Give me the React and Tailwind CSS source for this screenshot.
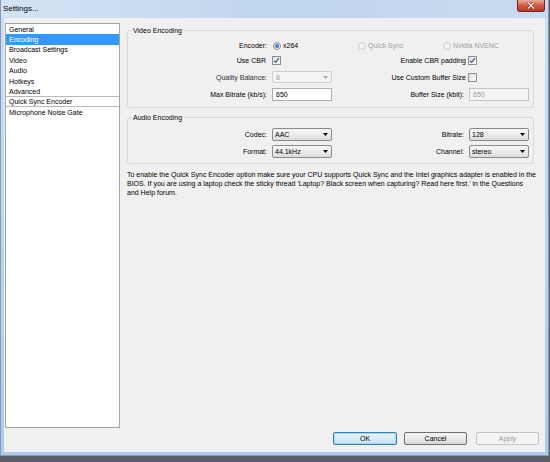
import React from "react";

const Check = ({ checked }) => (
  <span className="w-[9px] h-[9px] shrink-0 border border-[#8e8f8f] bg-gradient-to-br from-[#dcdcdc] to-white flex items-center justify-center">
    {checked && (
      <svg width="7" height="7" viewBox="0 0 7 7">
        <path d="M1 3.6 L2.7 5.4 L6 1.2" stroke="#3a5596" strokeWidth="1.2" fill="none" />
      </svg>
    )}
  </span>
);

const Radio = ({ checked, disabled }) => (
  <span
    className={
      disabled
        ? "w-[8px] h-[8px] shrink-0 rounded-full border border-[#c9c9c9] bg-[#f3f3f3]"
        : "w-[8px] h-[8px] shrink-0 rounded-full border border-[#8e8f8f] bg-gradient-to-br from-[#d8d8d8] to-white flex items-center justify-center"
    }
  >
    {checked && <span className="w-[4px] h-[4px] rounded-full bg-gradient-to-br from-[#5aa0e0] to-[#1d5fae]" />}
  </span>
);

const Arrow = ({ color }) => (
  <svg width="5" height="3" viewBox="0 0 5 3" className="shrink-0">
    <path d="M0 0 L5 0 L2.5 3 Z" fill={color} />
  </svg>
);

const Combo = ({ value, disabled, h }) => (
  <div
    className={
      disabled
        ? "w-[60px] h-[12px] flex items-center justify-between pl-[3px] pr-[3px] border border-[#cfcfcf] rounded-[2px] bg-[#f4f4f4] text-[#9a9a9a]"
        : "w-[60px] h-[13px] flex items-center justify-between pl-[2px] pr-[3px] border border-[#8a8a8a] rounded-[2px] bg-gradient-to-b from-[#f6f6f6] via-[#ececec] to-[#dcdcdc] text-black"
    }
  >
    <span>{value}</span>
    <Arrow color={disabled ? "#a8a8a8" : "#000"} />
  </div>
);

const Field = ({ value, disabled }) => (
  <div
    className={
      disabled
        ? "w-[60px] h-[13px] flex items-center pl-[3px] border border-[#c3c6c9] bg-[#f4f4f4] text-[#9a9a9a]"
        : "w-[60px] h-[13px] flex items-center pl-[3px] border border-[#abadb3] bg-white text-black"
    }
  >
    {value}
  </div>
);

const items = [
  "General",
  "Encoding",
  "Broadcast Settings",
  "Video",
  "Audio",
  "Hotkeys",
  "Advanced",
  "Quick Sync Encoder",
  "Microphone Noise Gate",
];

export default function App() {
  return (
    <div className="w-[550px] h-[462px] bg-[#5b5e64] overflow-hidden font-['Liberation_Sans',Arial,sans-serif] text-[7px] leading-[9px] text-black">
      <div className="w-[549px] h-[456px] flex flex-col bg-gradient-to-b from-[#cddff2] via-[#bfd5ee] to-[#aecbeb] border-l border-r border-b border-[#7f9cbf]">
        {/* Title bar */}
        <div className="h-[18px] flex justify-between bg-gradient-to-r from-[#d3e3f4] via-[#c0d6ee] to-[#c8dbf0]">
          <div className="pl-[2px] pt-[4px] text-[8px] leading-[10px] text-black">Settings...</div>
          <div className="w-[28px] h-[12px] mr-[3px] rounded-b-[3px] border border-t-0 border-[#6e2a20] bg-gradient-to-b from-[#e9a99a] via-[#d25a43] to-[#c1361f] flex items-center justify-center">
            <svg width="8" height="7" viewBox="0 0 8 7">
              <path d="M1 0.5 L7 6.5 M7 0.5 L1 6.5" stroke="#5a1a12" strokeWidth="2.4" />
              <path d="M1 0.5 L7 6.5 M7 0.5 L1 6.5" stroke="#ffffff" strokeWidth="1.3" />
            </svg>
          </div>
        </div>

        {/* Client */}
        <div className="mx-[3px] h-[434px] bg-[#f0f0f0] flex flex-col pt-[5px] pl-[1px]">
          <div className="flex h-[405px]">
            {/* List */}
            <div className="w-[115px] h-full border border-[#a5a5a5] bg-white">
              {items.map((it) => (
                <div
                  key={it}
                  className={
                    it === "Encoding"
                      ? "h-[10.4px] flex items-center pl-[3px] bg-[#3399ff] text-white"
                      : it === "Advanced" || it === "Quick Sync Encoder"
                      ? "h-[10.4px] flex items-center pl-[3px] border-b border-[#b9b9b9]"
                      : "h-[10.4px] flex items-center pl-[3px]"
                  }
                >
                  {it}
                </div>
              ))}
            </div>

            {/* Right panel */}
            <div className="ml-[7px] w-[413px] flex flex-col">
              {/* Video Encoding */}
              <fieldset className="w-[407px] mt-[2.5px] border border-[#d5dbe0] rounded-[3px] pb-[6px]">
                <legend className="ml-[4px] px-[1px] leading-[9px]">Video Encoding</legend>
                <div className="flex flex-col mt-[5.5px]">
                  <div className="h-[11px] flex items-center">
                    <div className="w-[139px] text-right">Encoder:</div>
                    <div className="ml-[6px] w-[85px] flex items-center gap-[2px]">
                      <Radio checked />
                      <span>x264</span>
                    </div>
                    <div className="w-[85px] flex items-center gap-[2px] text-[#a0a0a0]">
                      <Radio disabled />
                      <span>Quick Sync</span>
                    </div>
                    <div className="w-[85px] flex items-center gap-[2px] text-[#a0a0a0]">
                      <Radio disabled />
                      <span>Nvidia NVENC</span>
                    </div>
                  </div>
                  <div className="h-[11px] mt-[4px] flex items-center">
                    <div className="w-[139px] text-right pr-[1px]">Use CBR</div>
                    <div className="ml-[5px] w-[60px]">
                      <Check checked />
                    </div>
                    <div className="w-[136px] text-right pr-[2px]">Enable CBR padding</div>
                    <Check checked />
                  </div>
                  <div className="h-[12px] mt-[5px] flex items-center">
                    <div className="w-[139px] text-right text-[#303030]">Quality Balance:</div>
                    <div className="ml-[5px]">
                      <Combo value="8" disabled />
                    </div>
                    <div className="w-[136px] text-right pr-[2px]">Use Custom Buffer Size</div>
                    <Check />
                  </div>
                  <div className="h-[13px] mt-[5px] flex items-center">
                    <div className="w-[139px] text-right">Max Bitrate (kb/s):</div>
                    <div className="ml-[5px]">
                      <Field value="650" />
                    </div>
                    <div className="w-[132px] text-right">Buffer Size (kbit):</div>
                    <div className="ml-[5px]">
                      <Field value="650" disabled />
                    </div>
                  </div>
                </div>
              </fieldset>

              {/* Audio Encoding */}
              <fieldset className="w-[407px] mt-[4.5px] border border-[#d5dbe0] rounded-[3px] pb-[5px]">
                <legend className="ml-[4px] px-[1px] leading-[9px]">Audio Encoding</legend>
                <div className="flex flex-col mt-[6.5px]">
                  <div className="h-[13px] flex items-center">
                    <div className="w-[139px] text-right">Codec:</div>
                    <div className="ml-[5px]">
                      <Combo value="AAC" />
                    </div>
                    <div className="w-[132px] text-right">Bitrate:</div>
                    <div className="ml-[5px]">
                      <Combo value="128" />
                    </div>
                  </div>
                  <div className="h-[13px] mt-[4px] flex items-center">
                    <div className="w-[139px] text-right">Format:</div>
                    <div className="ml-[5px]">
                      <Combo value="44.1kHz" />
                    </div>
                    <div className="w-[132px] text-right">Channel:</div>
                    <div className="ml-[5px]">
                      <Combo value="stereo" />
                    </div>
                  </div>
                </div>
              </fieldset>

              {/* Info text */}
              <div className="mt-[5.5px] whitespace-nowrap leading-[9px]">
                <div>
                  To enable the Quick Sync Encoder option make sure your CPU supports Quick Sync and the Intel graphics adapter is enabled in the
                </div>
                <div>
                  BIOS. If you are using a laptop check the sticky thread 'Laptop? Black screen when capturing? Read here first.' in the Questions
                </div>
                <div>and Help forum.</div>
              </div>
            </div>
          </div>

          {/* Buttons */}
          <div className="mt-[4px] flex justify-end pr-[6px]">
            <div className="w-[64px] h-[13px] flex items-center justify-center rounded-[2px] border border-[#3c7fb1] bg-gradient-to-b from-[#eaf6fd] to-[#c4e3f7] shadow-[inset_0_0_0_1px_#9fd6f5]">
              OK
            </div>
            <div className="ml-[7px] w-[63px] h-[13px] flex items-center justify-center rounded-[2px] border border-[#707070] bg-gradient-to-b from-[#f2f2f2] via-[#ebebeb] to-[#d6d6d6]">
              Cancel
            </div>
            <div className="ml-[9px] w-[63px] h-[13px] flex items-center justify-center rounded-[2px] border border-[#c2c4c6] bg-[#f4f4f4] text-[#a0a0a0]">
              Apply
            </div>
          </div>
        </div>
      </div>
    </div>
  );
}
